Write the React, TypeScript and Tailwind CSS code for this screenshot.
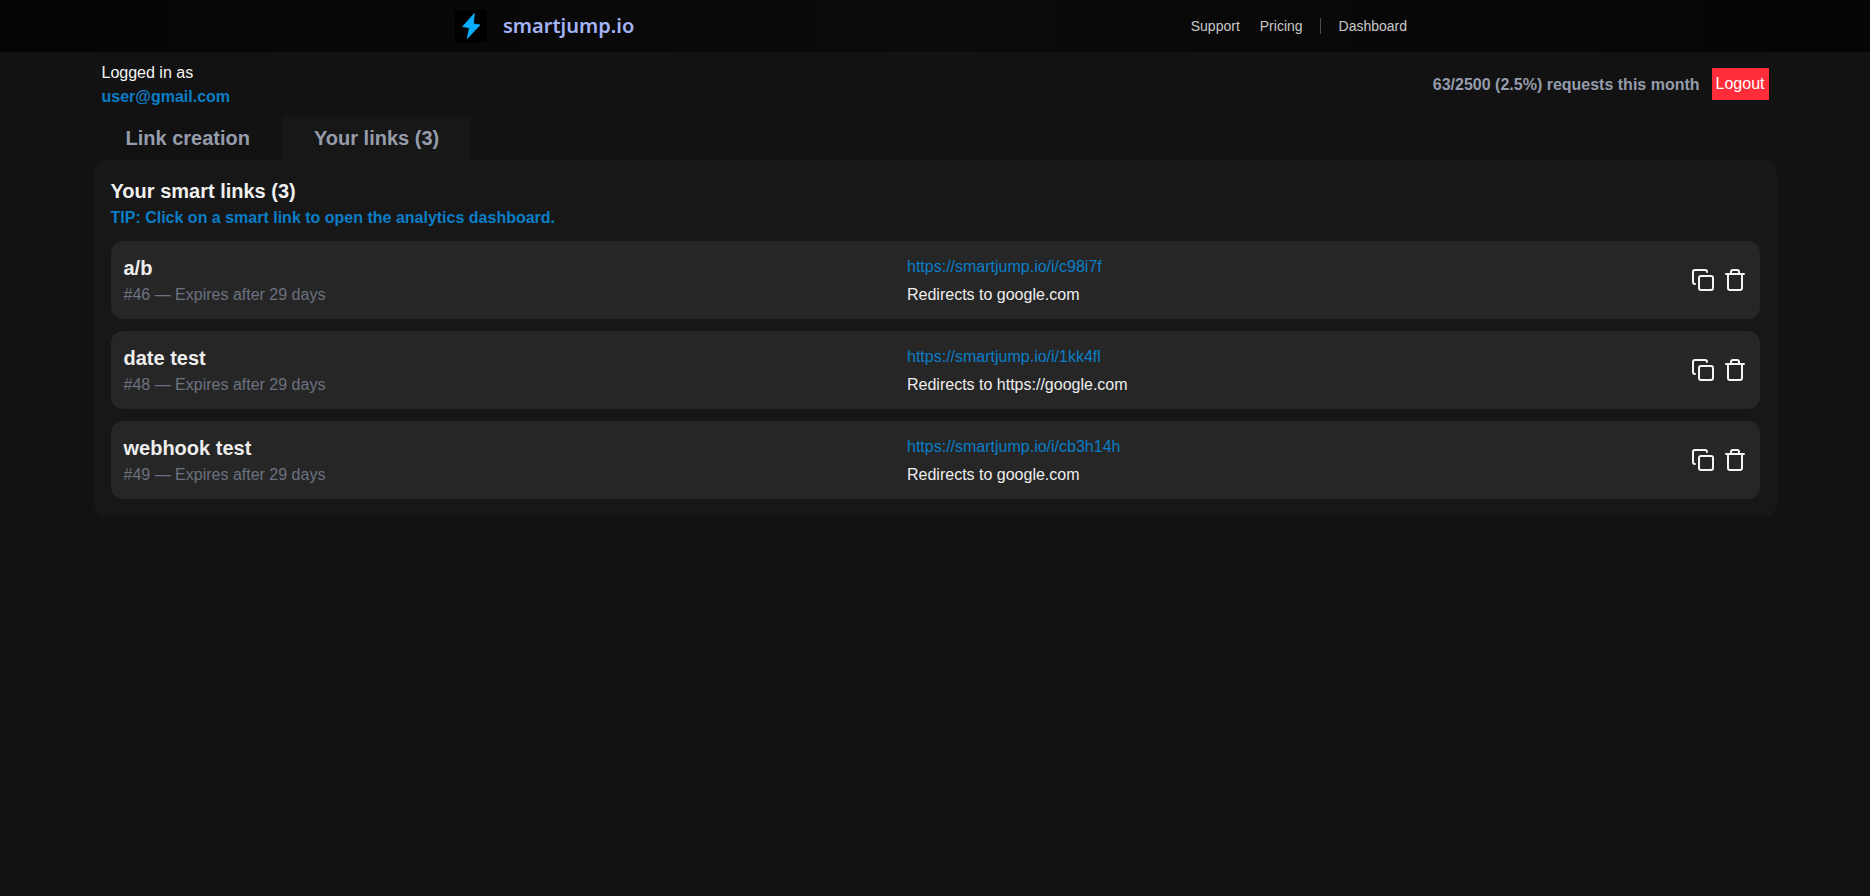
import { Copy, Trash } from "lucide-react";

const links = [
  { name: "a/b", id: 46, url: "https://smartjump.io/i/c98i7f", target: "google.com" },
  { name: "date test", id: 48, url: "https://smartjump.io/i/1kk4fl", target: "https://google.com" },
  { name: "webhook test", id: 49, url: "https://smartjump.io/i/cb3h14h", target: "google.com" },
];

export default function App() {
  return (
    <div className="min-h-screen bg-[#121212] font-['Liberation_Sans',Arial,sans-serif] text-white">
      {/* Navbar */}
      <nav className="h-[52px] bg-gradient-to-r from-[#050505] via-[#0b0b0b] to-[#050505] flex items-center">
        <div className="flex items-center ml-[455px]">
          <div className="w-8 h-8 bg-black">
            <svg viewBox="0 0 32 32" className="w-8 h-8">
              <path
                d="M19.4 3.6 L7.6 16.5 L14.4 17.8 L12.3 28.4 L25 15 L18.3 13.8 Z"
                fill="#0aaeff"
                stroke="#0aaeff"
                strokeWidth="0.8"
                strokeLinejoin="round"
              />
            </svg>
          </div>
          <span className="ml-4 text-xl font-semibold text-[#a3b3f5] font-['Noto_Sans',sans-serif]">smartjump.io</span>
        </div>
        <div className="flex items-center ml-[556.5px] text-sm text-[#c8c8c8]">
          <a>Support</a>
          <a className="ml-5">Pricing</a>
          <div className="w-px h-4 bg-[#4b4b4b] ml-[17.5px] mr-[17.5px]"></div>
          <a>Dashboard</a>
        </div>
      </nav>

      <div className="w-[90%] mx-auto">
        {/* User row */}
        <div className="flex justify-between items-center px-2 py-2">
          <div className="pt-px -mb-px">
            <p className="text-[#f5f5f5]">Logged in as</p>
            <p className="font-bold text-[#0a7ec8]">user@gmail.com</p>
          </div>
          <div className="flex items-center gap-3">
            <span className="font-bold text-[#959cab] pt-px">63/2500 (2.5%) requests this month</span>
            <button className="h-8 px-1 bg-[#ff2d3a] text-white">Logout</button>
          </div>
        </div>

        {/* Tabs */}
        <div className="flex text-xl font-bold text-[#959cab]">
          <button className="px-8 py-2">Link creation</button>
          <button className="px-8 py-2 bg-[#171717]">Your links (3)</button>
        </div>

        {/* Panel */}
        <div className="bg-[#171717] rounded-xl px-[17px] pt-[17px] pb-[17px]">
          <h2 className="text-xl font-bold text-[#f0f0f0]">Your smart links (3)</h2>
          <p className="font-bold text-[#0a7ec8] mt-px">TIP: Click on a smart link to open the analytics dashboard.</p>
          <div className="flex flex-col gap-3 mt-[11px]">
            {links.map((l) => (
              <div key={l.id} className="h-[78px] bg-[#262626] rounded-xl flex items-center px-[13px]">
                <div className="w-[783.5px]">
                  <p className="text-xl font-bold text-[#eeeeee]">{l.name}</p>
                  <p className="text-[#6b7280] mt-px">#{l.id} — Expires after 29 days</p>
                </div>
                <div className="flex-1 pt-px">
                  <a className="block text-[#0a7ec8]">{l.url}</a>
                  <p className="mt-1 text-[#eeeeee]">Redirects to {l.target}</p>
                </div>
                <div className="flex items-center gap-2 text-[#f5f5f5]">
                  <Copy className="w-6 h-6" />
                  <Trash className="w-6 h-6" />
                </div>
              </div>
            ))}
          </div>
        </div>
      </div>
    </div>
  );
}
